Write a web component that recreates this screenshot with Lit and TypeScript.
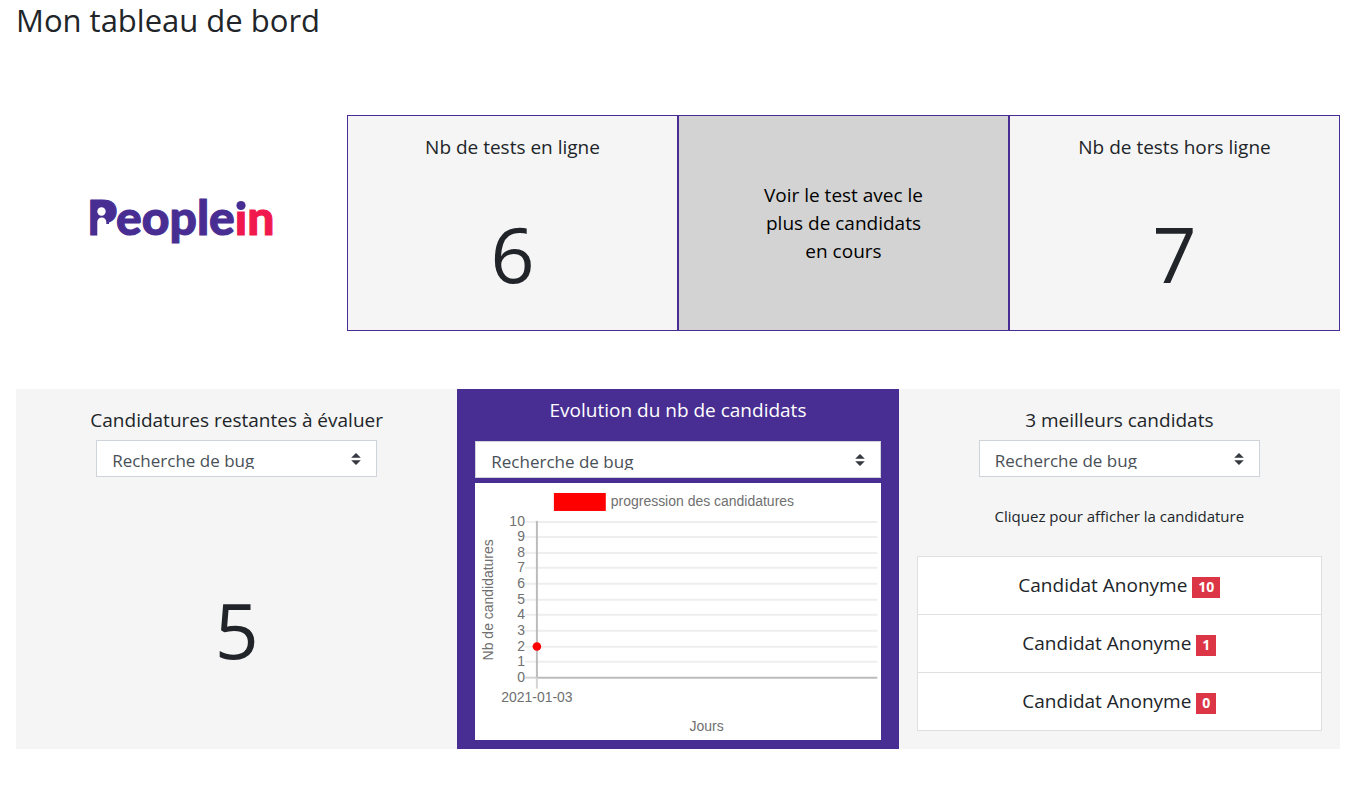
import { LitElement, html, svg, css } from "lit";
import { customElement, property } from "lit/decorators.js";

const TESTS = ["Recherche de bug"];

@customElement("people-logo")
export class PeopleLogo extends LitElement {
  static styles = css`
    :host { display: block; }
    .logo { display: block; width: 192px; height: 72px; }
    .word { font: 900 48px/60px Lato, sans-serif; stroke-width: 1; stroke-linejoin: round; }
    .brand { fill: #482e92; stroke: #482e92; }
    .accent { fill: #f0184c; stroke: #f0184c; }
    .hole { fill: #fff; }
    .fill { fill: #482e92; }
  `;

  render() {
    return html`
      <svg class="logo" viewBox="0 0 192 72" role="img" aria-label="Peoplein">
        <text class="word" x="1" y="48"><tspan class="brand">People</tspan><tspan class="accent">in</tspan></text>
        <rect class="fill" x="6" y="18" width="17" height="19"></rect>
        <circle class="hole" cx="15.5" cy="24.5" r="4.2"></circle>
        <path class="hole" d="M11.3 50V35a4.5 4.5 0 0 1 9 0v2q2 1 5-1l-3 6v8z"></path>
        <path class="hole" d="M147 9h16v15.500h-16z"></path>
        <circle class="fill" cx="155" cy="18.500" r="4.600"></circle>
      </svg>
    `;
  }
}

@customElement("candidate-chart")
export class CandidateChart extends LitElement {
  @property({ attribute: false }) points = [{ day: "2021-01-03", count: 2 }];

  static styles = css`
    :host { display: block; }
    .chart { display: block; width: 100%; height: auto; background: #fff; }
    .label { font: 14px "Liberation Sans", Arial, sans-serif; fill: #707070; }
    .end { text-anchor: end; }
    .middle { text-anchor: middle; }
    .grid { stroke: #eee; stroke-width: 2; }
    .axis { stroke: #bcbcbc; stroke-width: 2; }
    .tick { stroke: #d4d4d4; stroke-width: 2; }
    .series { fill: #f00; }
  `;

  private yOf(value: number) {
    return 195 - value * 15.65;
  }

  render() {
    const ticks = Array.from({ length: 11 }, (_, i) => i);
    return html`
      <svg class="chart" viewBox="0 0 406 257" role="img" aria-label="progression des candidatures">
        <rect class="series" x="79" y="10" width="52" height="18"></rect>
        <text class="label" x="136" y="23">progression des candidatures</text>
        ${ticks.map((t) => {
          const y = Math.round(this.yOf(t));
          return svg`
            <line class=${t === 0 ? "tick" : "grid"} x1="50" x2="62" y1=${y} y2=${y}></line>
            <line class=${t === 0 ? "axis" : "grid"} x1="62" x2="403" y1=${y} y2=${y}></line>
            <text class="label end" x="50" y=${y + 4}>${t}</text>`;
        })}
        <line class="axis" x1="62" x2="62" y1="38" y2="195"></line>
        <line class="tick" x1="62" x2="62" y1="195" y2="206"></line>
        ${this.points.map(
          (p) => svg`
            <circle class="series" cx="62" cy=${this.yOf(p.count)} r="4.3"></circle>
            <text class="label middle" x="62" y="219">${p.day}</text>`
        )}
        <text class="label middle" x="232" y="248">Jours</text>
        <text class="label middle" transform="translate(18 117) rotate(-90)">Nb de candidatures</text>
      </svg>
    `;
  }
}

@customElement("app-root")
export class AppRoot extends LitElement {
  @property({ attribute: false }) candidates = [
    { name: "Candidat Anonyme", score: 10 },
    { name: "Candidat Anonyme", score: 1 },
    { name: "Candidat Anonyme", score: 0 },
  ];

  static styles = css`
    :host {
      display: block;
      padding: 0 20px 52px 16px;
      font: 19px/28px "Open Sans", sans-serif;
      color: #212529;
      background: #fff;
    }
    * { box-sizing: border-box; }
    h1, h2, p, ul { margin: 0; padding: 0; font-weight: 400; }
    h1 { font-size: 31px; line-height: 40px; }
    h2 { font-size: 19px; line-height: 28px; }
    .summary {
      display: grid;
      grid-template-columns: repeat(4, 1fr);
      min-height: 216px;
      margin-top: 75px;
      text-align: center;
    }
    .brand { display: grid; place-items: center; }
    .tile {
      display: flex;
      flex-direction: column;
      padding: 17px 16px;
      border: 1px solid #482e92;
      background: #f5f5f5;
    }
    .number { font-size: 77px; line-height: 96px; }
    .tile .number { margin-top: 45px; }
    .featured {
      align-items: center;
      justify-content: center;
      padding: 16px 80px;
      background: #d3d3d3;
      color: #000;
      text-decoration: none;
    }
    .panels {
      display: grid;
      grid-template-columns: repeat(3, 1fr);
      min-height: 360px;
      margin-top: 58px;
      text-align: center;
    }
    .panel { padding: 17px 18px; background: #f5f5f5; }
    .evolution { padding: 7px 18px 9px; background: #482e92; color: #fff; }
    .select {
      appearance: none;
      display: block;
      width: 281px;
      max-width: 100%;
      height: 37px;
      margin: 6px auto 0;
      padding: 8px 36px 7px 15px;
      border: 1px solid #ced4da;
      border-radius: 0;
      font: 17px/24px "Open Sans", sans-serif;
      color: #495057;
      background: #fff url("data:image/svg+xml,%3Csvg xmlns='http://www.w3.org/2000/svg' viewBox='0 0 4 5'%3E%3Cpath fill='%23343a40' d='M2 0L0 2h4zm0 5L0 3h4z'/%3E%3C/svg%3E") no-repeat right 15px center / 10px 12px;
    }
    .evolution .select { width: 100%; margin: 17px 0 5px; }
    .remaining { margin-top: 105px; }
    .hint { margin: 27px 0 28px; font-size: 15px; line-height: 24px; }
    .list { list-style: none; background: #fff; border: 1px solid #dfdfdf; }
    .item + .item { border-top: 1px solid #dfdfdf; }
    .candidate {
      display: block;
      padding: 14px 16px 15px;
      color: inherit;
      text-decoration: none;
    }
    .badge {
      display: inline-block;
      padding: 3px 6px 4px;
      background: #dc3545;
      color: #fff;
      font-size: 14px;
      line-height: 14px;
      font-weight: 700;
    }
  `;

  private picker(id: string) {
    return html`<select class="select" id=${id} aria-labelledby=${id + "-title"}>
      ${TESTS.map((t) => html`<option>${t}</option>`)}
    </select>`;
  }

  render() {
    return html`
      <h1>Mon tableau de bord</h1>
      <section class="summary">
        <div class="brand"><people-logo></people-logo></div>
        <div class="tile">
          <h2>Nb de tests en ligne</h2>
          <p class="number">6</p>
        </div>
        <a class="tile featured" href="#test">Voir le test avec le plus de candidats en cours</a>
        <div class="tile">
          <h2>Nb de tests hors ligne</h2>
          <p class="number">7</p>
        </div>
      </section>
      <section class="panels">
        <div class="panel">
          <h2 id="remaining-title">Candidatures restantes à évaluer</h2>
          ${this.picker("remaining")}
          <p class="number remaining">5</p>
        </div>
        <div class="panel evolution">
          <h2 id="evolution-title">Evolution du nb de candidats</h2>
          ${this.picker("evolution")}
          <candidate-chart></candidate-chart>
        </div>
        <div class="panel">
          <h2 id="best-title">3 meilleurs candidats</h2>
          ${this.picker("best")}
          <p class="hint">Cliquez pour afficher la candidature</p>
          <ul class="list">
            ${this.candidates.map(
              (c) => html`<li class="item">
                <a class="candidate" href="#candidature">${c.name} <span class="badge">${c.score}</span></a>
              </li>`
            )}
          </ul>
        </div>
      </section>
    `;
  }
}
